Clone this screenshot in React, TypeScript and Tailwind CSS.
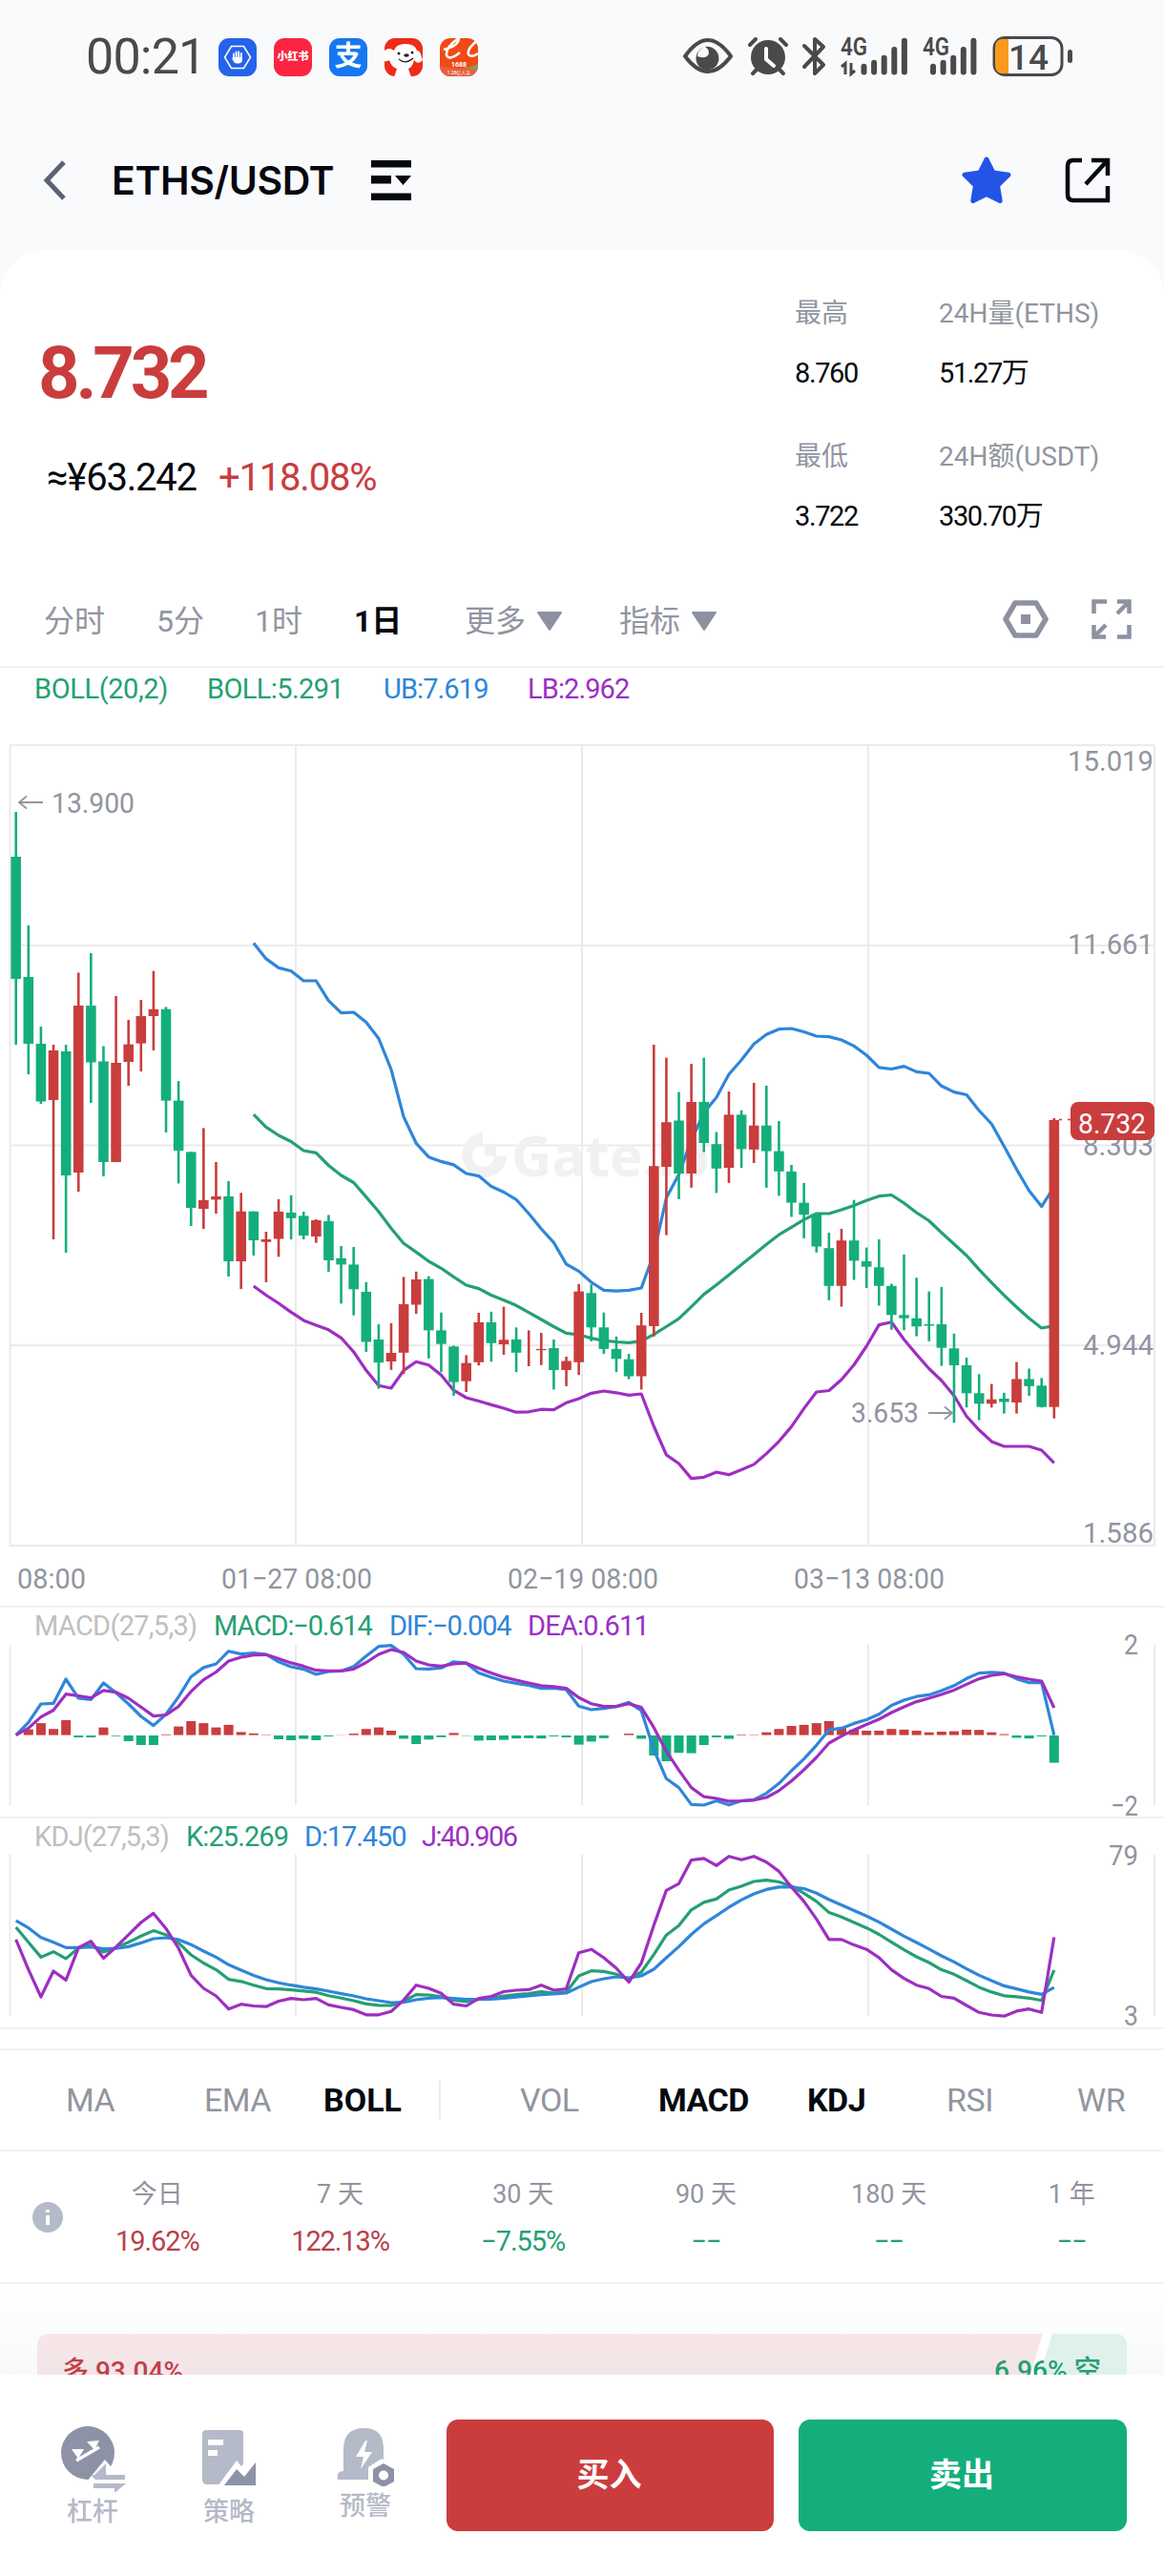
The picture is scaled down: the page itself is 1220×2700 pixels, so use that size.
import type { ReactNode } from 'react';
import clsx from 'clsx';

const RED = '#c93d3d';
const GREEN = '#14ae7c';
const MID = '#24a072';
const BLUE = '#2f86d9';
const PURPLE = '#9d2fc2';
const AXIS = '#91959f';
const GRID = '#ebebed';

// [isUp, high, bodyTop, bodyBottom, low] in canvas units
const candles: [number, number, number, number, number][] = [
  [0, 851, 898, 1026, 1095], [0, 970, 1024, 1094, 1126], [0, 1076, 1094, 1154.5, 1157], [1, 1095, 1101, 1153, 1299],
  [0, 1095, 1102, 1232, 1313], [1, 1019.5, 1054, 1229, 1249], [0, 999, 1054, 1113.5, 1156], [0, 1096.5, 1112.5, 1218, 1233],
  [1, 1044, 1114, 1218, 1218], [1, 1069, 1094.6, 1113, 1138], [1, 1048, 1065, 1093.6, 1123], [1, 1017.7, 1057.8, 1065, 1101],
  [0, 1055.4, 1057.8, 1153.6, 1187], [0, 1133, 1153.6, 1206, 1240.4], [0, 1207.4, 1207.4, 1266, 1285], [1, 1182.4, 1258, 1267, 1288],
  [1, 1218, 1254, 1257.4, 1272], [0, 1238, 1254, 1322, 1338], [1, 1250.3, 1269.7, 1322, 1351], [0, 1269.7, 1269.7, 1300, 1316],
  [1, 1291, 1299, 1301.7, 1344], [1, 1257, 1270, 1298.5, 1317.3], [0, 1252.7, 1271, 1276.8, 1299], [0, 1270, 1274.4, 1295, 1299],
  [1, 1278, 1279, 1296, 1302.7], [0, 1273.5, 1280, 1321, 1333], [0, 1306, 1318.8, 1325.4, 1366.4], [0, 1307, 1325.4, 1351.3, 1378.7],
  [0, 1343.8, 1354, 1406.5, 1417], [0, 1388, 1404, 1428.2, 1455.6], [1, 1387, 1418, 1427, 1435.8], [1, 1338.4, 1367, 1417.8, 1440],
  [1, 1332.8, 1341, 1367.5, 1377], [0, 1337.6, 1340.6, 1394.4, 1423.9], [0, 1375.7, 1394.4, 1408.7, 1438.2], [0, 1410.4, 1411.3, 1448.6, 1462.9],
  [1, 1420.4, 1428.6, 1447.7, 1459], [1, 1376, 1386, 1427.8, 1431.2], [0, 1374.8, 1386, 1407.8, 1427.3], [1, 1369.6, 1404.3, 1409, 1420],
  [0, 1391.3, 1403.9, 1417.8, 1438.2], [1, 1394.4, 1412, 1412, 1432], [1, 1397, 1413.9, 1415.2, 1430.8], [0, 1403.9, 1413, 1436, 1456.4],
  [1, 1422, 1426.5, 1436, 1452.9], [1, 1345.8, 1353.6, 1427.8, 1441.2], [0, 1346.2, 1355.3, 1391.3, 1406], [0, 1375.7, 1391.3, 1413.9, 1419],
  [0, 1400.9, 1413.9, 1424.3, 1438.2], [0, 1419, 1424.7, 1442.5, 1445.5], [1, 1376, 1389.2, 1442.5, 1456.4], [1, 1095, 1222.2, 1390, 1400.9],
  [1, 1108.6, 1176.2, 1223, 1294.6], [0, 1144.6, 1174.5, 1230, 1256.9], [1, 1115, 1155, 1230, 1244.8], [0, 1108.6, 1155, 1198, 1207.5],
  [0, 1186.6, 1199.2, 1224.8, 1250.4], [1, 1144, 1168.4, 1224, 1240], [0, 1163.7, 1168.4, 1204.4, 1224], [1, 1135, 1179.7, 1204.9, 1219],
  [0, 1138, 1179.7, 1206.6, 1244.8], [0, 1175, 1206.6, 1227.8, 1253.4], [0, 1221, 1227.9, 1260.6, 1275.5], [0, 1240, 1260.6, 1273.2, 1297.9],
  [0, 1271, 1272.6, 1306.5, 1312.8], [0, 1292, 1308.2, 1347.8, 1362.8], [1, 1288, 1300.2, 1347.8, 1369.6], [0, 1257.7, 1300.2, 1321.4, 1341.5],
  [0, 1307.6, 1322, 1327.7, 1350], [0, 1299, 1328.3, 1347.8, 1368.5], [0, 1345.5, 1347.8, 1378.3, 1393.8], [0, 1315, 1378.3, 1381.7, 1394.3],
  [0, 1339.2, 1381.7, 1390.3, 1400.6], [0, 1353.6, 1388, 1389.5, 1405.8], [0, 1349, 1388, 1412.7, 1431.6], [0, 1397.8, 1413.3, 1431, 1491.3],
  [0, 1423, 1431, 1460.3, 1475.3], [0, 1440.3, 1460.3, 1471.3, 1488.5], [1, 1450.6, 1466.7, 1471.3, 1475.3], [0, 1459.8, 1466, 1469.5, 1481.6],
  [1, 1427.6, 1445.4, 1470, 1481.6], [0, 1434.5, 1445.4, 1452.9, 1463], [0, 1444.3, 1452.3, 1474.7, 1475.3], [1, 1172, 1173.9, 1474.7, 1486.7],
];

const upper = [
  988.4, 1004.9, 1014.4, 1017.7, 1028, 1028, 1048.8, 1061.6, 1061, 1071.5, 1088.5, 1121, 1170.6, 1198.3, 1212.7, 1217.4, 1220.9,
  1230, 1232.6, 1243.5, 1249.5, 1257.3, 1272, 1288, 1302.4, 1325, 1332.4, 1344, 1352.3, 1353.2, 1352.3, 1350, 1314, 1255.6, 1230.9,
  1195, 1166.3, 1150.2, 1126, 1111, 1094.3, 1084.3, 1078.7, 1078, 1081.5, 1086, 1086.6, 1090, 1096.4, 1106, 1118.8, 1120.5, 1117.6,
  1123.4, 1125, 1138.3, 1144.6, 1147.5, 1164, 1178, 1201.5, 1225.6, 1248, 1264.6, 1244,
];
const middle = [
  1168.2, 1181.4, 1190, 1196.5, 1206, 1208.3, 1221.5, 1232, 1239.5, 1254.6, 1270, 1287.5, 1303.3, 1312.4, 1322, 1329.3, 1338.4,
  1347, 1350.6, 1357.5, 1362.7, 1368.3, 1375.7, 1383, 1390.5, 1397.4, 1399, 1402.6, 1405.2, 1406.5, 1407.4, 1405.6, 1398.7, 1390.5,
  1382.2, 1369.6, 1356.6, 1346.7, 1336.3, 1325.4, 1315, 1304.2, 1294.2, 1286.4, 1278.4, 1272, 1272, 1268, 1263.4, 1258.3, 1253.7,
  1252.5, 1261, 1271, 1279.5, 1292, 1304, 1316, 1330.6, 1344.4, 1357.6, 1370, 1381.7, 1392, 1389.7,
];
const lower = [
  1348, 1357.5, 1366, 1375.4, 1383.9, 1389, 1393.8, 1402.3, 1417, 1436.3, 1452.3, 1455, 1436.4, 1427.3, 1430.8, 1441.2, 1457.2,
  1465, 1468.5, 1472.4, 1476, 1480.2, 1479.8, 1477.2, 1477.6, 1470.3, 1466, 1460.3, 1458, 1459.8, 1462.4, 1461, 1495, 1524.9, 1534,
  1549.6, 1548.3, 1543, 1545.7, 1540.5, 1534.9, 1523.6, 1510.8, 1495.4, 1476.4, 1459, 1457.5, 1446, 1430.5, 1411, 1388.6, 1385.7,
  1404, 1419.6, 1434.5, 1447, 1463, 1484.5, 1498.8, 1510.9, 1516, 1516, 1516, 1520, 1533.3,
];

const dif = [
  1818.6, 1805.4, 1786, 1785.4, 1760, 1780, 1781.4, 1764, 1774.3, 1786, 1799, 1808.6, 1796.8, 1778.6, 1757.5, 1747.9, 1744, 1730.7,
  1733.6, 1732.5, 1734, 1741.8, 1747, 1749.6, 1755, 1752, 1751.4, 1746.8, 1735.7, 1725.7, 1724.6, 1734, 1749, 1749.3, 1748.2, 1741.8,
  1743.2, 1753.6, 1757.9, 1762, 1764.3, 1766.4, 1769.6, 1769.3, 1771, 1788.2, 1792, 1790.7, 1788.6, 1784.3, 1792.9, 1834, 1864.3,
  1873.6, 1891.4, 1892, 1887.5, 1891.8, 1887.5, 1886.4, 1879.6, 1869.3, 1856, 1843.6, 1829.3, 1813.2, 1811.4, 1806.4, 1802.5, 1796.8,
  1787.5, 1782, 1778.2, 1776.4, 1772, 1766.8, 1759.3, 1753.6, 1752.9, 1753.6, 1759.6, 1763.6, 1763.6, 1818.6,
];
const dea = [
  1818.6, 1811.4, 1799.6, 1792.5, 1775.7, 1777.5, 1779.6, 1771.8, 1773.6, 1780, 1789.3, 1798.6, 1797.5, 1788.6, 1772.9, 1760.7,
  1752.5, 1741, 1737, 1734.6, 1734.3, 1738.6, 1742.9, 1746.4, 1750.7, 1751.4, 1751.4, 1749.3, 1742.5, 1734, 1729, 1732, 1741, 1745,
  1746.4, 1744, 1743.2, 1748.6, 1753.6, 1757.9, 1761, 1764, 1766.8, 1767.9, 1769.6, 1779.3, 1785.7, 1788.6, 1788.6, 1785.7, 1789.6,
  1810.7, 1835.7, 1855.4, 1873.6, 1883.2, 1885, 1887.9, 1887.5, 1886.8, 1884, 1876.8, 1866.8, 1855, 1842, 1827, 1819.6, 1813.2,
  1807.5, 1802, 1795, 1789, 1783.6, 1780, 1776, 1771.4, 1765.4, 1759.6, 1756, 1754.3, 1757.5, 1760, 1762, 1790,
];
const bars = [
  0, 6, 12.5, 6.4, 15.7, -2, -2, 8, -0.7, -6, -10, -10, 0.7, 9, 14.6, 12.5, 8, 10.7, 3.2, 1.8, 0.4, -4, -5, -3.6, -5, -1, 0.2, 1.5,
  6.4, 8, 4.6, -3.5, -9, -4.3, -1.8, 2.2, -0.4, -5.4, -5, -4.6, -3.2, -2.9, -3.2, -1, -2, -9.6, -6.4, -2.9, 0, 1.5, -3.5, -21, -27,
  -18.2, -18.6, -10, -2, -3.6, 0.6, 0.4, 2.9, 6.4, 9.6, 10.7, 12.5, 14.6, 8, 5.7, 4.6, 4.6, 6.4, 5.7, 4.6, 2.9, 3.6, 4, 5.7, 5.4,
  2.9, 1, -2.5, -3.2, -1, -28.6,
];

const kLine = [
  2020, 2035.7, 2051.4, 2045.7, 2052.9, 2041.8, 2038.6, 2046, 2041.4, 2035.7, 2029.3, 2023.6, 2027.9, 2036.4, 2049, 2057.5, 2064.6,
  2074.6, 2076.8, 2080.7, 2084.3, 2084.6, 2085.7, 2086.8, 2088.2, 2091.8, 2094.3, 2097, 2100.4, 2101.8, 2102, 2097.5, 2090.7, 2091,
  2092.9, 2096.4, 2097.9, 2095.4, 2094.3, 2092, 2090.7, 2089.6, 2087.5, 2089, 2087.9, 2071, 2065.7, 2066.4, 2069.3, 2074.3, 2067,
  2048.6, 2028.2, 2018.2, 2001.8, 1993.9, 1990.4, 1981, 1977, 1972, 1970.7, 1972.5, 1977, 1984.3, 1992.9, 2004.6, 2009.3, 2015,
  2020.7, 2027.5, 2035.7, 2043.6, 2051, 2057, 2064.6, 2069.3, 2076, 2082.9, 2087.9, 2091.8, 2092.9, 2094.3, 2096.8, 2065,
];
const dLine = [
  2013.2, 2020.7, 2030.7, 2035.7, 2041.4, 2041.4, 2040.7, 2042.5, 2042.2, 2040.4, 2036.4, 2032, 2031, 2032.9, 2038.2, 2045, 2051.4,
  2059.3, 2065, 2070.4, 2075, 2078.2, 2080.7, 2082.9, 2084.6, 2087, 2089.6, 2092, 2095, 2097, 2099, 2098.6, 2096, 2094.3, 2093.6,
  2094.6, 2095.7, 2095.7, 2095.4, 2094.3, 2093.2, 2092, 2090.7, 2090, 2089, 2082.9, 2077, 2074, 2072, 2073.2, 2071, 2064, 2052,
  2040.4, 2027.5, 2016.4, 2007.9, 1999, 1991.4, 1985, 1980.4, 1977.9, 1977.9, 1979.6, 1984.3, 1991, 1996.8, 2002.5, 2008.2, 2014.6,
  2022, 2029.3, 2036, 2042.9, 2050, 2056.4, 2063.6, 2070.4, 2076, 2081.4, 2084.6, 2087.9, 2090.4, 2083.2,
];
const jLine = [
  2032.9, 2064.3, 2093, 2066, 2075.4, 2041.4, 2034.6, 2052.5, 2040.7, 2027.9, 2015, 2005.4, 2021.4, 2042, 2070.4, 2084, 2092, 2105.7,
  2100.7, 2102.5, 2103.2, 2097.5, 2094.6, 2096, 2094.6, 2101.4, 2104, 2106.4, 2111.8, 2111.8, 2108.2, 2096.4, 2080.7, 2084, 2089.3,
  2100.7, 2102.5, 2094.6, 2092.5, 2087.5, 2086, 2085.4, 2080.7, 2086, 2084.6, 2046.8, 2043.2, 2052, 2063, 2077.5, 2057.5, 2017.9,
  1981.4, 1974.3, 1949.6, 1947.9, 1955.4, 1945.7, 1949.3, 1945.7, 1951.8, 1961.4, 1977.9, 1992.9, 2011.4, 2032.9, 2032.9, 2038.6,
  2043.2, 2051.8, 2064.6, 2073.6, 2080.7, 2084.3, 2092.5, 2094.3, 2102, 2109.3, 2112, 2113.2, 2107.9, 2105.7, 2109.3, 2030.4,
];

const xAt = (i: number) => 16.7 + i * 13.11;
const points = (ys: number[], start = 0) => ys.map((y, i) => `${xAt(i + start).toFixed(1)},${y}`).join(' ');

function Line({ ys, color, start = 0 }: { ys: number[]; color: string; start?: number }) {
  return <polyline points={points(ys, start)} fill="none" stroke={color} strokeWidth="3.200" strokeLinejoin="round" />;
}

interface LabelProps {
  x: number;
  y: number;
  w: number;
  children: string;
  fill?: string;
}

function Label({ x, y, w, children, fill = AXIS }: LabelProps) {
  return (
    <text x={x} y={y} textLength={w} lengthAdjust="spacingAndGlyphs" fontSize="30" fill={fill}>
      {children}
    </text>
  );
}

function Columns({ top, bottom }: { top: number; bottom: number }) {
  return (
    <g stroke={GRID} strokeWidth="2">
      {[10.5, 310, 610, 910, 1210].map((x) => (
        <line key={x} x1={x} x2={x} y1={top} y2={bottom} />
      ))}
    </g>
  );
}

function PriceChart() {
  return (
    <svg viewBox="0 745 1220 938" className="block h-[938px] w-full overflow-visible">
      <Columns top={781} bottom={1620} />
      <g stroke={GRID} strokeWidth="2">
        {[781, 991, 1200.5, 1410, 1620].map((y) => (
          <line key={y} x1="10" x2="1210" y1={y} y2={y} />
        ))}
      </g>
      <g fill="#f1f1f2">
        <path d="M506 1187a23.500 23.500 0 1 0 25.500 25H518a11.500 11.500 0 1 1-12-12Z" />
        <path d="M508 1199h12v12.500h-12Z" />
        <text x="536" y="1233" fontSize="59" fontWeight="700" fontFamily="Open Sans, sans-serif" textLength="208" lengthAdjust="spacingAndGlyphs">
          Gate.io
        </text>
      </g>
      <Label x={1119} y={808} w={90}>15.019</Label>
      <Label x={1119} y={1000} w={90}>11.661</Label>
      <Label x={1135} y={1211} w={74}>8.303</Label>
      <Label x={1135} y={1420} w={74}>4.944</Label>
      <Label x={1135} y={1616.500} w={74}>1.586</Label>
      <Line ys={upper} color={BLUE} start={19} />
      <Line ys={lower} color={PURPLE} start={19} />
      <Line ys={middle} color={MID} start={19} />
      {candles.map(([up, high, top, bottom, low], i) => (
        <g key={i} fill={up ? RED : GREEN}>
          <rect x={xAt(i) - 1.3} y={high} width="2.600" height={low - high} />
          <rect x={xAt(i) - 5.300} y={top} width="10.600" height={bottom - top} />
        </g>
      ))}
      <path d="M1110 1173.500h3m6 0h3" stroke={RED} strokeWidth="1.500" />
      <rect x="1122" y="1155" width="88" height="40" rx="8" fill={RED} />
      <Label x={1130} y={1188} w={71} fill="#fff">8.732</Label>
      <path d="M45 841H20m8-6.500-8 6.500 8 6.500" fill="none" stroke={AXIS} strokeWidth="1.800" />
      <Label x={54} y={852} w={87}>13.900</Label>
      <path d="M973 1481h25m-8-6.500 8 6.500-8 6.500" fill="none" stroke={AXIS} strokeWidth="1.800" />
      <Label x={892} y={1491} w={71}>3.653</Label>
      <Label x={18} y={1664.500} w={72}>08:00</Label>
      <Label x={232} y={1664.500} w={158}>01−27 08:00</Label>
      <Label x={532} y={1664.500} w={158}>02−19 08:00</Label>
      <Label x={832} y={1664.500} w={158}>03−13 08:00</Label>
    </svg>
  );
}

function MacdChart() {
  return (
    <svg viewBox="0 1722 1220 182" className="block h-[182px] w-full overflow-visible">
      <Columns top={1724} bottom={1892} />
      {bars.map((h, i) => (
        <rect key={i} x={xAt(i) - 5} y={h > 0 ? 1818.6 - h : 1819} width="10" height={Math.abs(h)} fill={h > 0 ? RED : GREEN} />
      ))}
      <Line ys={dif} color={BLUE} />
      <Line ys={dea} color={PURPLE} />
      <Label x={1178} y={1734} w={15}>2</Label>
      <Label x={1164} y={1903} w={29}>−2</Label>
    </svg>
  );
}

function KdjChart() {
  return (
    <svg viewBox="0 1943 1220 182" className="block h-[182px] w-full overflow-visible">
      <Columns top={1944} bottom={2113} />
      <Line ys={kLine} color={MID} />
      <Line ys={dLine} color={BLUE} />
      <Line ys={jLine} color={PURPLE} />
      <Label x={1162} y={1954.500} w={31}>79</Label>
      <Label x={1178} y={2123} w={15}>3</Label>
    </svg>
  );
}

function AppBadges() {
  return (
    <div className="ml-[19px] flex gap-[18px]">
      <svg className="size-10" viewBox="0 0 40 40">
        <rect width="40" height="40" rx="11" fill="#2563eb" />
        <path d="M13.500 8.500h13l7 11.500-7 11.500h-13L6.500 20Z" fill="none" stroke="#fff" strokeWidth="1.500" />
        <path d="M16 16.500V22m2.600-7.500V22m2.600-7.500V22m2.600-6v8" stroke="#fff" strokeWidth="1.800" strokeLinecap="round" />
        <path d="M14.500 20h10.200v2.500q0 4-4 4h-1.700q-2.500 0-4.500-4.500Z" fill="#fff" />
      </svg>
      <div className="flex size-10 items-center justify-center rounded-[11px] bg-[#fb2543] text-[11px] font-black whitespace-nowrap text-white">小红书</div>
      <div className="flex size-10 items-center justify-center rounded-[11px] bg-[#1677f0] text-[29px] font-bold text-white">支</div>
      <svg className="size-10" viewBox="0 0 40 40">
        <clipPath id="dog">
          <rect width="40" height="40" rx="11" />
        </clipPath>
        <rect width="40" height="40" rx="11" fill="#ee2c18" />
        <path clipPath="url(#dog)" d="M0 13q5-4 10 0 2-7 12-7t12 7q3 0 4 4l2 6q-3 4-7 2l-2-2q-2 8-6 9l3 9H10l3-9q-6-2-8-9-3 2-5 1Z" fill="#fff" />
        <circle cx="15" cy="16" r="1.500" fill="#222" />
        <circle cx="29" cy="15" r="1.500" fill="#222" />
        <ellipse cx="23" cy="18" rx="2.800" ry="1.800" fill="#222" />
        <path d="M15 22q7 6 15-1" fill="none" stroke="#222" strokeWidth="1.200" />
      </svg>
      <svg className="size-10" viewBox="0 0 40 40">
        <clipPath id="badge">
          <rect width="40" height="40" rx="11" />
        </clipPath>
        <g clipPath="url(#badge)">
          <rect width="40" height="40" fill="#f04a16" />
          <path d="M0 29q20 5 40 0v11H0Z" fill="#e8603c" />
          <path d="M22 31q10 0 18-4v6Z" fill="#8f9a5c" />
          <path d="M4 12Q20 8 20 0q-14 9-13 18 3 6 14-3M40 2Q28 11 30 17q3 4 10-1" fill="none" stroke="#fff" strokeWidth="2.600" />
        </g>
        <text x="20" y="30" fontSize="7" fontWeight="700" textAnchor="middle" fill="#fff">1688</text>
        <text x="20" y="38" fontSize="5" textAnchor="middle" fill="#fff">1.28亿人字</text>
      </svg>
    </div>
  );
}

function Signal({ x, arrows }: { x: number; arrows?: boolean }) {
  const tops = [66.700, 62.700, 57.700, 49, 39.700];
  const first = arrows ? 24.500 : 11;
  return (
    <g>
      <text x={x} y="58" fontSize="26" fontWeight="600" fill="#4a4a4a" textLength="28" lengthAdjust="spacingAndGlyphs">4G</text>
      {arrows && <path d={`M${x + 1} 70l4-3.500V78m6-12v11.500l4-3.500`} fill="none" stroke="#4a4a4a" strokeWidth="3" />}
      {tops.map((top, i) => (
        <rect key={top} x={x + first - 3 + i * 10.600} y={top} width="6" height={78.500 - top} rx="3" fill="#4a4a4a" />
      ))}
    </g>
  );
}

function StatusBar() {
  return (
    <div className="flex h-[120px] items-center pl-[90px]">
      <span className="w-[120px] text-[52px] tracking-[-0.8px] text-[#4a4a4a]">00:21</span>
      <AppBadges />
      <svg viewBox="710 36 420 48" className="ml-[209px] h-12 w-[420px]">
        <g fill="none" stroke="#4a4a4a" strokeWidth="4">
          <path d="M718 59q24-34 48 0-24 32-48 0Z" strokeLinejoin="round" />
          <path d="M786 47l6-6m26 0 6 6M789 77l6-6m26 6-6-6" strokeLinecap="round" />
          <path d="M843 48l20 20-9 9V41l9 8-20 21" strokeLinejoin="round" strokeLinecap="round" />
          <rect x="1042" y="39.500" width="71" height="39" rx="11" strokeWidth="3" />
        </g>
        <path d="M737 50a12 12 0 1 0 16 8 12 12 0 0 0-14-9q6 4 3 9-3 4-11 1 0-6 6-9Z" fill="#4a4a4a" />
        <circle cx="805" cy="60" r="18" fill="#4a4a4a" />
        <path d="M803 51v11l8 7" fill="none" stroke="#fff" strokeWidth="4" strokeLinecap="round" />
        <Signal x={881} arrows />
        <Signal x={967} />
        <path d="M1057 41h-6q-8 0-8 9v18q0 9 8 9h6Z" fill="#fb9b1c" />
        <rect x="1119" y="52" width="5" height="14" rx="2.500" fill="#4a4a4a" />
        <text x="1057" y="73" fontSize="37" fontWeight="500" fill="#4a4a4a">14</text>
      </svg>
    </div>
  );
}

function Header() {
  return (
    <div className="flex h-[142px] items-center pr-[56px] pb-1 pl-[45px]">
      <svg viewBox="0 0 24 42" className="h-[42px] w-6">
        <path d="M22 2 4 21l18 19" fill="none" stroke="#5d6273" strokeWidth="5" />
      </svg>
      <h1 className="ml-12 w-[271px] pt-0.5 font-[Inter] text-[41px] font-semibold tracking-[-0.4px] text-[#06080f]">ETHS/USDT</h1>
      <svg viewBox="0 0 42 42" className="ml-px size-[42px]" fill="#06080f">
        <path d="M0 0h42v7.500H0ZM0 16h21v8.500H0ZM25 16h17l-8.500 10ZM0 34.500h42V42H0Z" />
      </svg>
      <svg viewBox="0 0 54 52" className="ml-auto h-[52px] w-[54px]">
        <path d="m27 4 7 14 16 2.300-11.500 11.200 2.700 16L27 40.500 12.800 47.500l2.700-16L4 20.300l16-2.300Z" fill="#2354e6" stroke="#2354e6" strokeWidth="5" strokeLinejoin="round" />
      </svg>
      <svg viewBox="0 0 48 48" className="ml-[55px] size-12" fill="none" stroke="#06080f" strokeWidth="4.500">
        <path d="M18 3H9q-6 0-6 6v30q0 6 6 6h36V30M28 3h17v16M44 4 22 28" />
      </svg>
    </div>
  );
}

function Stat({ label, value }: { label: string; value: string }) {
  return (
    <div className="flex flex-col whitespace-nowrap">
      <span className="h-[62px] text-[28px] leading-[64px] text-[#91959f]">{label}</span>
      <span className="h-[62px] text-[29px] leading-[64px] tracking-[-1.4px] text-[#06080f]">{value}</span>
    </div>
  );
}

function Summary() {
  return (
    <div className="flex h-[338px] pt-[35px] pl-[40px]">
      <div className="w-[793px]">
        <p className="h-[150px] pt-[26px] text-[76px] leading-[136px] font-bold tracking-[-4.2px] text-[#c93d3d]">8.732</p>
        <p className="flex items-center gap-[22px] pt-[29px] pl-[9px] text-[40px] leading-[50px] tracking-[-1.2px]">
          <span className="w-[158px] whitespace-nowrap text-[#06080f]">≈¥63.242</span>
          <span className="text-[#c93d3d]">+118.08%</span>
        </p>
      </div>
      <div className="grid auto-rows-[150px] grid-cols-[151px_180px]">
        <Stat label="最高" value="8.760" />
        <Stat label="24H量(ETHS)" value="51.27万" />
        <Stat label="最低" value="3.722" />
        <Stat label="24H额(USDT)" value="330.70万" />
      </div>
    </div>
  );
}

function Caret() {
  return (
    <svg viewBox="0 0 26 20" className="ml-3 h-5 w-[26px]">
      <path d="M1 1h24L13 19Z" fill="#8d91a1" stroke="#8d91a1" strokeWidth="2" strokeLinejoin="round" />
    </svg>
  );
}

function IntervalTabs() {
  return (
    <div className="flex h-[100px] items-center border-b-2 border-[#f1f1f3] pt-1 pr-[34px] pl-[46px] text-[32px] text-[#91959f]">
      <span className="w-[118px]">分时</span>
      <span className="w-[103px]">5分</span>
      <span className="w-[104px]">1时</span>
      <span className="w-[116px] font-bold text-[#06080f]">1日</span>
      <span className="flex w-[162px] items-center">更多<Caret /></span>
      <span className="flex items-center">指标<Caret /></span>
      <svg viewBox="0 0 48 42" className="mb-1 ml-auto h-[42px] w-12" fill="none" stroke="#8d91a1">
        <path d="M13 4h22l10 17-10 17H13L3 21Z" strokeWidth="5.500" strokeLinejoin="round" />
        <path d="M19 16h10v10H19Z" fill="#8d91a1" stroke="none" />
      </svg>
      <svg viewBox="0 0 42 42" className="mb-1 ml-[45px] size-[42px]" fill="none" stroke="#8d91a1" strokeWidth="4.500">
        <path d="M2.500 15V2.500H16M27 2.500h12.500V15M39 3 27 15M39.500 27v12.500H27M15 39.500H2.500V27M3 39l12-12" />
      </svg>
    </div>
  );
}

function Legend({ children, className }: { children: ReactNode; className?: string }) {
  return <div className={clsx('flex items-center pl-[36px] text-[29px] whitespace-nowrap', className)}>{children}</div>;
}

function IndicatorTabs() {
  const on = 'font-bold text-[#06080f]';
  return (
    <div className="flex h-[106px] items-center border-b-2 border-[#f1f1f3] pl-[69px] text-[34px] tracking-[-0.5px] text-[#91959f]">
      <span className="w-[145px]">MA</span>
      <span className="w-[125px]">EMA</span>
      <span className={clsx('w-[121px] tracking-normal', on)}>BOLL</span>
      <i className="h-10 w-0.5 bg-[#ececef]" />
      <span className="ml-[83px] w-[145px]">VOL</span>
      <span className={clsx('w-[156px]', on)}>MACD</span>
      <span className={clsx('w-[146px]', on)}>KDJ</span>
      <span className="w-[137px]">RSI</span>
      <span>WR</span>
    </div>
  );
}

const periods = [
  { label: '今日', value: '19.62%', tone: 'text-[#b8414a]' },
  { label: '7 天', value: '122.13%', tone: 'text-[#b8414a]' },
  { label: '30 天', value: '−7.55%', tone: 'text-[#24a072]' },
  { label: '90 天', value: '−−', tone: 'text-[#24a072]' },
  { label: '180 天', value: '−−', tone: 'text-[#24a072]' },
  { label: '1 年', value: '−−', tone: 'text-[#24a072]' },
];

function Performance() {
  return (
    <div className="flex h-[139px] items-center border-b-2 border-[#f1f1f3] pl-[34px]">
      <svg viewBox="0 0 32 32" className="size-8">
        <circle cx="16" cy="16" r="16" fill="#b5bac9" />
        <path d="M16 14v10m0-16v3" stroke="#fff" strokeWidth="4" />
      </svg>
      <div className="ml-[3px] grid grid-cols-[repeat(6,191.700px)] pt-0.5 text-center">
        {periods.map((p) => (
          <div key={p.label} className="flex flex-col">
            <span className="h-[49px] text-[27px] leading-[49px] text-[#91959f]">{p.label}</span>
            <span className={clsx('h-[49px] text-[29px] leading-[49px] tracking-[-1.1px]', p.tone)}>{p.value}</span>
          </div>
        ))}
      </div>
    </div>
  );
}

function LongShort() {
  return (
    <div className="h-[95px] overflow-hidden bg-linear-to-b from-white to-[#f8f9fa] px-[39px] pt-[52px]">
      <div className="flex h-[80px] overflow-hidden rounded-[12px] bg-linear-to-b from-[#f7e6e8] to-[#eee4e8]">
        <span className="pt-[18px] pl-[26px] text-[28px] leading-[44px] font-medium text-[#c04149]">多 93.04%</span>
        <svg viewBox="0 0 150 80" className="ml-auto h-20 w-[150px]">
          <path d="M62 0H73L48 80H37Z" fill="#fff" />
          <path d="M72 0h78v80H47Z" fill="#e0f1ec" />
          <text x="11" y="48" fontSize="28" fontWeight="500" fill={MID} textLength="112" lengthAdjust="spacingAndGlyphs">6.96% 空</text>
        </svg>
      </div>
    </div>
  );
}

function Action({ label, className, children }: { label: string; className?: string; children: ReactNode }) {
  return (
    <div className={clsx('flex flex-col items-center text-[27px] leading-[42px] font-medium text-[#b5b9c7]', className)}>
      <svg viewBox="0 0 70 70" className="size-[70px]">
        {children}
      </svg>
      {label}
    </div>
  );
}

function BottomBar() {
  return (
    <div className="flex h-[211px] bg-white pt-[47px] pr-[39px] pl-[62px]">
      <Action label="杠杆" className="w-[70px] pt-[6px]">
        <circle cx="30" cy="29" r="28" fill="#8d92a6" />
        <path d="M13 25h13l-6 10Zm16-8 13-1-5 10Z" fill="#fff" />
        <path d="M18 37 42 23" stroke="#fff" strokeWidth="3.500" />
        <path d="M28 60 48 36l10 12-3 22Z" fill="#fff" />
        <path d="M33 52h36v5H38ZM36 53l13-13v13Z" fill="#b5bac9" />
        <path d="M36 61h34L58 71v-5H36Z" fill="#b5bac9" />
      </Action>
      <Action label="策略" className="ml-[73px] w-[70px] pt-[6px]">
        <path d="M12 5h34q4 0 4 4v32L28 62H12q-5 0-5-5V9q0-4 5-4Z" fill="#b5bac9" />
        <path d="M13 15h16v6H13Zm0 11h10v6H13Z" fill="#fff" />
        <path d="M23 64 43 37l8 10 12-14v31Z" fill="#fff" />
        <path d="M30 63 43 46l8 8 12-15v24Z" fill="#8d92a6" />
      </Action>
      <Action label="预警" className="ml-[73px] w-[70px]">
        <path d="M12 54V31q0-22 22-22 20 0 20 22v32H6q-2-9 6-9Z" fill="#b5bac9" />
        <path d="M35 22 25 39h8l-3 13 12-18h-8l3-12Z" fill="#fff" />
        <path d="M52 41 69 50v18l-15 6-16-8V50Z" fill="#fff" />
        <path d="m54 46 11 6v13l-11 6-11-6V52Z" fill="#8d92a6" />
        <circle cx="54" cy="58.500" r="5" fill="#fff" />
      </Action>
      <button className="ml-[50px] h-[117px] w-[343px] rounded-[12px] bg-[#cb3d3d] pr-0.5 text-[34px] font-bold text-white">买入</button>
      <button className="ml-[26px] h-[117px] w-[344px] rounded-[12px] bg-[#14ae7c] pr-0.5 text-[34px] font-bold text-white">卖出</button>
    </div>
  );
}

export default function App() {
  return (
    <div className="h-[2700px] w-[1220px] overflow-hidden bg-[#f9fafc] font-[Roboto,'Noto_Sans_CJK_SC',sans-serif]">
      <StatusBar />
      <Header />
      <div className="rounded-t-[48px] bg-white">
        <Summary />
        <IntervalTabs />
        <Legend className="h-[45px]">
          <span className="w-[181px] tracking-[-0.4px] text-[#24a072]">BOLL(20,2)</span>
          <span className="w-[185px] tracking-[-0.6px] text-[#24a072]">BOLL:5.291</span>
          <span className="w-[151px] tracking-[-0.9px] text-[#2f86d9]">UB:7.619</span>
          <span className="tracking-[-0.9px] text-[#9d2fc2]">LB:2.962</span>
        </Legend>
        <PriceChart />
        <div className="border-y-2 border-[#f0f0f2]">
          <Legend className="h-[37px] pt-0.5">
            <span className="w-[188px] tracking-[-0.7px] text-[#bfbfc2]">MACD(27,5,3)</span>
            <span className="w-[184px] tracking-[-1.2px] text-[#24a072]">MACD:−0.614</span>
            <span className="w-[145px] tracking-[-1.2px] text-[#2f86d9]">DIF:−0.004</span>
            <span className="tracking-[-0.8px] text-[#9d2fc2]">DEA:0.611</span>
          </Legend>
          <MacdChart />
        </div>
        <div className="border-b-2 border-[#f0f0f2]">
          <Legend className="h-[37px] pt-0.5">
            <span className="w-[159px] tracking-[-0.8px] text-[#bfbfc2]">KDJ(27,5,3)</span>
            <span className="w-[124px] tracking-[-0.9px] text-[#24a072]">K:25.269</span>
            <span className="w-[123px] tracking-[-1.1px] text-[#2f86d9]">D:17.450</span>
            <span className="tracking-[-1.6px] text-[#9d2fc2]">J:40.906</span>
          </Legend>
          <KdjChart />
        </div>
        <div className="h-[22px] border-b-2 border-[#f1f1f3]" />
        <IndicatorTabs />
        <Performance />
        <LongShort />
        <BottomBar />
      </div>
    </div>
  );
}
